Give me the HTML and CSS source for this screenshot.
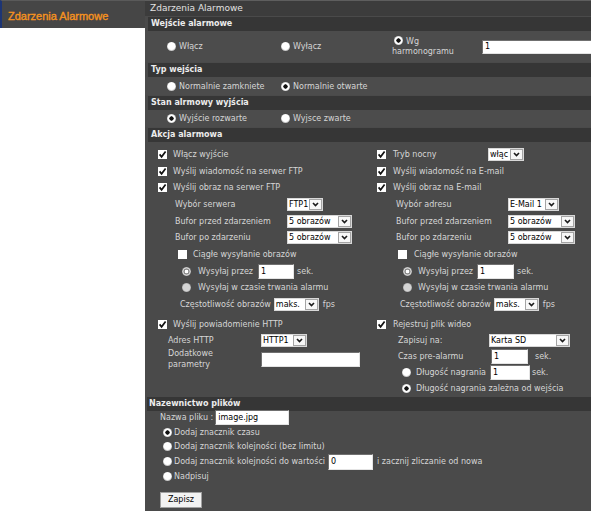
FILE: index.html
```html
<!DOCTYPE html>
<html lang="pl">
<head>
<meta charset="utf-8">
<title>Zdarzenia Alarmowe</title>
<link rel="stylesheet" href="styles.css">
</head>
<body>
<div class="page">
  <aside class="side">
    <div class="side-bar">Zdarzenia Alarmowe</div>
  </aside>
  <main class="main">
    <div class="title">Zdarzenia Alarmowe</div>

    <div class="hd">Wejście alarmowe</div>
    <div class="opts r1">
      <div class="cell w1"><span class="rb"></span>Włącz</div>
      <div class="cell w2"><span class="rb"></span>Wyłącz</div>
      <div class="cell w3 wrap"><span class="rb on"></span>Wg harmonogramu</div>
      <span class="inp big">1</span>
    </div>

    <div class="hd">Typ wejścia</div>
    <div class="opts r2">
      <div class="cell w1"><span class="rb"></span>Normalnie zamkniete</div>
      <div class="cell w2"><span class="rb on"></span>Normalnie otwarte</div>
    </div>

    <div class="hd">Stan alrmowy wyjścia</div>
    <div class="opts r3">
      <div class="cell w1"><span class="rb on"></span>Wyjście rozwarte</div>
      <div class="cell w2"><span class="rb"></span>Wyjsce zwarte</div>
    </div>

    <div class="hd">Akcja alarmowa</div>
    <div class="akcja">
      <div class="col left">
        <div class="row p13"><span class="cb on"><svg viewBox="0 0 9 9"><path d="M1.6 4.4 L3.6 6.8 L7.6 1.6"/></svg></span>Włącz wyjście</div>
        <div class="row p13"><span class="cb on"><svg viewBox="0 0 9 9"><path d="M1.6 4.4 L3.6 6.8 L7.6 1.6"/></svg></span>Wyślij wiadomość na serwer FTP</div>
        <div class="row p13"><span class="cb on"><svg viewBox="0 0 9 9"><path d="M1.6 4.4 L3.6 6.8 L7.6 1.6"/></svg></span>Wyślij obraz na serwer FTP</div>
        <div class="row p30"><span class="lb l112">Wybór serwera</span><span class="sel s36"><span class="sv">FTP1</span><span class="arr"><svg viewBox="0 0 7 5"><path d="M1 1 L3.5 3.6 L6 1"/></svg></span></span></div>
        <div class="row p30"><span class="lb l112">Bufor przed zdarzeniem</span><span class="sel s65"><span class="sv">5 obrazów</span><span class="arr"><svg viewBox="0 0 7 5"><path d="M1 1 L3.5 3.6 L6 1"/></svg></span></span></div>
        <div class="row p30"><span class="lb l112">Bufor po zdarzeniu</span><span class="sel s65"><span class="sv">5 obrazów</span><span class="arr"><svg viewBox="0 0 7 5"><path d="M1 1 L3.5 3.6 L6 1"/></svg></span></span></div>
        <div class="row p33"><span class="cb"></span>Ciągłe wysyłanie obrazów</div>
        <div class="row p37"><span class="rb dis on"></span>Wysyłaj przez<span class="inp i36 ml5">1</span><span class="ml3">sek.</span></div>
        <div class="row p37"><span class="rb dis"></span>Wysyłaj w czasie trwania alarmu</div>
        <div class="row p35">Częstotliwość obrazów<span class="sel s45 ml3"><span class="sv">maks.</span><span class="arr"><svg viewBox="0 0 7 5"><path d="M1 1 L3.5 3.6 L6 1"/></svg></span></span><span class="ml4">fps</span></div>
        <div class="row h16 gap p13"><span class="cb on"><svg viewBox="0 0 9 9"><path d="M1.6 4.4 L3.6 6.8 L7.6 1.6"/></svg></span>Wyślij powiadomienie HTTP</div>
        <div class="row h16 p23"><span class="lb l93">Adres HTTP</span><span class="sel s46"><span class="sv">HTTP1</span><span class="arr"><svg viewBox="0 0 7 5"><path d="M1 1 L3.5 3.6 L6 1"/></svg></span></span></div>
        <div class="row h22 p23"><span class="lb l93 two">Dodatkowe<br>parametry</span><span class="inp i99"></span></div>
      </div>

      <div class="col right">
        <div class="row p12"><span class="cb on"><svg viewBox="0 0 9 9"><path d="M1.6 4.4 L3.6 6.8 L7.6 1.6"/></svg></span><span class="lb l95">Tryb nocny</span><span class="sel s36"><span class="sv">włąc</span><span class="arr"><svg viewBox="0 0 7 5"><path d="M1 1 L3.5 3.6 L6 1"/></svg></span></span></div>
        <div class="row p12"><span class="cb on"><svg viewBox="0 0 9 9"><path d="M1.6 4.4 L3.6 6.8 L7.6 1.6"/></svg></span>Wyślij wiadomość na E-mail</div>
        <div class="row p12"><span class="cb on"><svg viewBox="0 0 9 9"><path d="M1.6 4.4 L3.6 6.8 L7.6 1.6"/></svg></span>Wyślij obraz na E-mail</div>
        <div class="row p31"><span class="lb l112">Wybór adresu</span><span class="sel s51"><span class="sv">E-Mail 1</span><span class="arr"><svg viewBox="0 0 7 5"><path d="M1 1 L3.5 3.6 L6 1"/></svg></span></span></div>
        <div class="row p31"><span class="lb l112">Bufor przed zdarzeniem</span><span class="sel s67"><span class="sv">5 obrazów</span><span class="arr"><svg viewBox="0 0 7 5"><path d="M1 1 L3.5 3.6 L6 1"/></svg></span></span></div>
        <div class="row p31"><span class="lb l112">Bufor po zdarzeniu</span><span class="sel s67"><span class="sv">5 obrazów</span><span class="arr"><svg viewBox="0 0 7 5"><path d="M1 1 L3.5 3.6 L6 1"/></svg></span></span></div>
        <div class="row p33"><span class="cb"></span>Ciągłe wysyłanie obrazów</div>
        <div class="row p38"><span class="rb dis on"></span>Wysyłaj przez<span class="inp i37 ml4">1</span><span class="ml3">sek.</span></div>
        <div class="row p38"><span class="rb dis"></span>Wysyłaj w czasie trwania alarmu</div>
        <div class="row p35">Częstotliwość obrazów<span class="sel s45 ml3"><span class="sv">maks.</span><span class="arr"><svg viewBox="0 0 7 5"><path d="M1 1 L3.5 3.6 L6 1"/></svg></span></span><span class="ml4">fps</span></div>
        <div class="row h16 gap p12"><span class="cb on"><svg viewBox="0 0 9 9"><path d="M1.6 4.4 L3.6 6.8 L7.6 1.6"/></svg></span>Rejestruj plik wideo</div>
        <div class="row h16 p33"><span class="lb l91">Zapisuj na:</span><span class="sel s81"><span class="sv">Karta SD</span><span class="arr"><svg viewBox="0 0 7 5"><path d="M1 1 L3.5 3.6 L6 1"/></svg></span></span></div>
        <div class="row h16 p33"><span class="lb l93">Czas pre-alarmu</span><span class="inp i37">1</span><span class="ml7">sek.</span></div>
        <div class="row h16 p37"><span class="rb"></span>Długość nagrania<span class="inp i40 ml4">1</span><span class="ml2">sek.</span></div>
        <div class="row h16 p37"><span class="rb on"></span>Długość nagrania zależna od wejścia</div>
      </div>
    </div>

    <div class="hd hd-naz">Nazewnictwo plików</div>
    <div class="naz">
      <div class="nrow first">Nazwa pliku :<span class="inp i74 ml2">image.jpg</span></div>
      <div class="nrow radio"><span class="rb on"></span>Dodaj znacznik czasu</div>
      <div class="nrow radio"><span class="rb"></span>Dodaj znacznik kolejności (bez limitu)</div>
      <div class="nrow radio"><span class="rb"></span>Dodaj znacznik kolejności do wartości<span class="inp i45 ml3 tall">0</span><span class="ml4">i zacznij zliczanie od nowa</span></div>
      <div class="nrow radio"><span class="rb"></span>Nadpisuj</div>
      <button class="btn" type="button">Zapisz</button>
    </div>
  </main>
</div>
</body>
</html>
```

FILE: styles.css
```css
* { box-sizing: border-box; }

body {
  margin: 0;
  background: #fff;
  font-family: "DejaVu Sans", Verdana, sans-serif;
  font-size: 8px;
}

.page {
  display: flex;
  min-height: 511px;
}

/* sidebar */
.side {
  width: 145px;
  flex: none;
}

.side-bar {
  height: 28px;
  background: #464646;
  border-left: 2px solid #1d3575;
  border-top: 1px solid #5a5a5a;
  padding: 3px 0 0 6px;
  font-family: "Liberation Sans", Arial, sans-serif;
  font-size: 11px;
  line-height: 24px;
  color: #f7931e;
  -webkit-text-stroke: 0.35px #f7931e;
}

/* main panel */
.main {
  flex: 1;
  min-width: 0;
  background: #4a4a4a;
  color: #d6d6d6;
  overflow: hidden;
}

.title {
  height: 16px;
  border-top: 1px solid #5e5e5e;
  background: #3c3c3c;
  font-size: 9px;
  line-height: 15px;
  padding-left: 5px;
  color: #e2e2e2;
}

.hd {
  height: 14px;
  margin: 1px 0 0 3px;
  padding-left: 3px;
  background: #363636;
  font-weight: bold;
  font-size: 8px;
  line-height: 14px;
  color: #ececec;
  white-space: nowrap;
}

.hd-naz {
  margin-left: 2px;
  padding-left: 2px;
  margin-top: 0;
}

/* top option rows */
.opts {
  display: flex;
  align-items: center;
  padding-left: 20px;
  background: #4c4c4c;
  white-space: nowrap;
}

.r1 { height: 31px; }
.r2 { height: 18px; }
.r3 { height: 17px; }

.cell {
  display: flex;
  align-items: center;
  flex: none;
}

.w1 { width: 114px; }
.w2 { width: 113px; }
.w3 { width: 90px; }

.cell.wrap {
  display: block;
  white-space: normal;
  line-height: 10px;
  padding-right: 4px;
}

.cell.wrap .rb {
  display: inline-block;
  vertical-align: -1px;
}

/* radio */
.rb {
  width: 9px;
  height: 9px;
  border-radius: 50%;
  flex: none;
  margin: 0 3px 0 2px;
  background: radial-gradient(circle at 50% 45%, #ffffff 0, #ffffff 3.4px, #c9c9c9 4.5px);
}

.rb.on {
  background: radial-gradient(circle at 50% 50%, #111 0, #111 1.9px, #fff 2.4px, #fff 3.4px, #c9c9c9 4.5px);
}

.rb.dis {
  background: radial-gradient(circle at 50% 50%, #d4d4d4 0, #d4d4d4 3.4px, #aaa 4.5px);
}

.rb.dis.on {
  background: radial-gradient(circle at 50% 50%, #fff 0, #fff 1.5px, #8c8c8c 2.1px, #8c8c8c 2.8px, #d6d6d6 3.3px, #d6d6d6 3.8px, #9c9c9c 4.5px);
}

/* checkbox */
.cb {
  width: 9px;
  height: 9px;
  flex: none;
  background: #fff;
  margin-right: 6px;
  display: flex;
  align-items: center;
  justify-content: center;
}

.cb svg {
  width: 9px;
  height: 9px;
  display: block;
}

.cb path {
  fill: none;
  stroke: #111;
  stroke-width: 1.7;
}

/* akcja */
.akcja {
  display: flex;
  padding-top: 4px;
}

.col { flex: none; }
.col.left { width: 220px; }
.col.right { width: 226px; }
.col.right .cb { margin-right: 7px; }

.row {
  display: flex;
  align-items: center;
  height: 16.7px;
  white-space: nowrap;
}

.row.h16 { height: 16px; }
.row.h22 { height: 22px; }
.row.gap { margin-top: 4px; }

.p12 { padding-left: 12px; }
.p13 { padding-left: 13px; }
.p23 { padding-left: 23px; }
.p30 { padding-left: 30px; }
.p31 { padding-left: 31px; }
.p33 { padding-left: 33px; }
.p35 { padding-left: 35px; }
.p37 { padding-left: 37px; }
.p38 { padding-left: 38px; }

.p37 .rb, .p38 .rb { margin: 0 7px 0 0; }
.right .p37 .rb { margin-right: 5px; }
.right .p38 .rb { margin-right: 6px; }

.lb { flex: none; }
.l91 { width: 91px; }
.l93 { width: 93px; }
.l95 { width: 95px; }
.l112 { width: 112px; }

.lb.two {
  white-space: normal;
  line-height: 10.5px;
}

.ml2 { margin-left: 2px; }
.ml3 { margin-left: 3px; }
.ml4 { margin-left: 4px; }
.ml5 { margin-left: 5px; }
.ml7 { margin-left: 7px; }

/* select */
.sel {
  display: flex;
  align-items: center;
  flex: none;
  height: 13px;
  background: #fff;
  border: 1px solid #d8d8d8;
  color: #000;
  overflow: hidden;
}

.sv {
  flex: 1;
  min-width: 0;
  padding-left: 1px;
  overflow: hidden;
  line-height: 11px;
}

.arr {
  flex: none;
  width: 13px;
  height: 11px;
  border: 1px solid #a4a4a4;
  background: #f7f7f7;
  display: flex;
  align-items: center;
  justify-content: center;
}

.arr svg {
  width: 7px;
  height: 5px;
  display: block;
}

.arr path {
  fill: none;
  stroke: #1a1a1a;
  stroke-width: 1.6;
}

.s36 { width: 36px; }
.s45 { width: 45px; }
.s46 { width: 46px; }
.s51 { width: 51px; }
.s65 { width: 65px; }
.s67 { width: 67px; }
.s81 { width: 81px; }

/* text input */
.inp {
  display: block;
  flex: none;
  height: 15px;
  background: #fff;
  border-top: 1px solid #707070;
  border-left: 1px solid #707070;
  border-right: 1px solid #e4e4e4;
  border-bottom: 1px solid #e4e4e4;
  color: #000;
  padding-left: 2px;
  line-height: 13px;
  overflow: hidden;
}

.inp.big { width: 130px; height: 14px; line-height: 12px; }
.i36 { width: 36px; }
.i37 { width: 37px; }
.i40 { width: 40px; }
.i45 { width: 45px; }
.i74 { width: 74px; }
.i99 { width: 99px; }
.inp.tall { height: 16px; line-height: 14px; }

/* nazewnictwo */
.naz {
  padding-left: 15px;
}

.nrow {
  display: flex;
  align-items: center;
  height: 14.7px;
  white-space: nowrap;
}

.nrow.first { height: 14px; }

.nrow.radio { padding-left: 3px; }
.nrow.radio .rb { margin: 0 2px 0 0; }

.btn {
  display: block;
  margin-top: 8px;
  width: 42px;
  height: 16px;
  padding: 0;
  background: #f2f2f2;
  border: 1px solid #a0a0a0;
  color: #000;
  font-family: "DejaVu Sans", Verdana, sans-serif;
  font-size: 8px;
}
```
